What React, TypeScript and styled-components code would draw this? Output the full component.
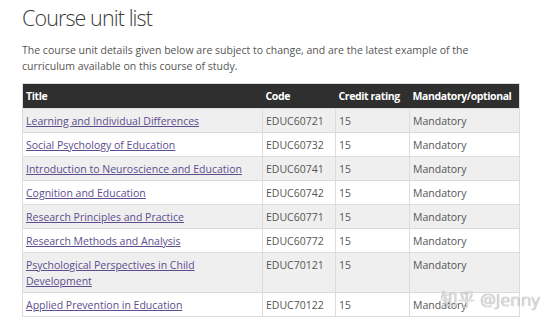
import styled, { createGlobalStyle } from "styled-components";

const units = [
  { title: "Learning and Individual Differences", code: "EDUC60721" },
  { title: "Social Psychology of Education", code: "EDUC60732" },
  { title: "Introduction to Neuroscience and Education", code: "EDUC60741" },
  { title: "Cognition and Education", code: "EDUC60742" },
  { title: "Research Principles and Practice", code: "EDUC60771" },
  { title: "Research Methods and Analysis", code: "EDUC60772" },
  { title: "Psychological Perspectives in Child Development", code: "EDUC70121" },
  { title: "Applied Prevention in Education", code: "EDUC70122" },
];

export default function App() {
  return (
    <>
      <GlobalStyle />
      <StyledPage>
        <StyledHeading>Course unit list</StyledHeading>
        <StyledIntro>
          The course unit details given below are subject to change, and are the latest example of the
          curriculum available on this course of study.
        </StyledIntro>
        <StyledTable>
          <colgroup>
            <col style={{ width: 240 }} />
            <col style={{ width: 73 }} />
            <col style={{ width: 74 }} />
            <col />
          </colgroup>
          <thead>
            <tr>
              <StyledTh>Title</StyledTh>
              <StyledTh>Code</StyledTh>
              <StyledTh>Credit rating</StyledTh>
              <StyledTh>Mandatory/optional</StyledTh>
            </tr>
          </thead>
          <tbody>
            {units.map((unit) => (
              <StyledRow key={unit.code}>
                <StyledTd>
                  <StyledLink href="#">{unit.title}</StyledLink>
                </StyledTd>
                <StyledTd>{unit.code}</StyledTd>
                <StyledTd>15</StyledTd>
                <StyledTd>Mandatory</StyledTd>
              </StyledRow>
            ))}
          </tbody>
        </StyledTable>
        <StyledWatermark>知乎 @Jenny</StyledWatermark>
      </StyledPage>
    </>
  );
}

const GlobalStyle = createGlobalStyle`
  body {
    margin: 0;
    background: #fff;
    font-family: "Open Sans", "Noto Sans CJK SC", sans-serif;
  }
`;

const StyledPage = styled.div`
  position: relative;
  width: 554px;
  height: 332px;
  padding: 0 34px 0 22px;
  box-sizing: border-box;
  overflow: hidden;
`;

const StyledHeading = styled.h1`
  margin: 0;
  padding-top: 4px;
  font-size: 21.5px;
  font-weight: 300;
  letter-spacing: -0.9px;
  line-height: 28px;
  color: #3a3a3a;
`;

const StyledIntro = styled.p`
  margin: 10px 0 9px;
  width: 460px;
  font-size: 10.5px;
  line-height: 16px;
  color: #555;
`;

const StyledTable = styled.table`
  width: 498px;
  table-layout: fixed;
  border-collapse: collapse;
  font-size: 10.5px;
  line-height: 16px;
  border: 1px solid #dcdcdc;
`;

const StyledTh = styled.th`
  background: #2f2f2f;
  color: #fff;
  font-weight: 700;
  letter-spacing: -0.4px;
  text-align: left;
  white-space: nowrap;
  padding: 4px 4px 4px 3px;
  height: 16px;
`;

const StyledRow = styled.tr`
  &:nth-child(odd) {
    background: #efefef;
  }
  &:nth-child(even) {
    background: #fff;
  }
`;

const StyledTd = styled.td`
  padding: 4px 4px 3px 3px;
  vertical-align: top;
  color: #555;
  border: 1px solid #dcdcdc;
`;

const StyledLink = styled.a`
  color: #5c4d8e;
  text-decoration: underline;
`;

const StyledWatermark = styled.div`
  position: absolute;
  right: 14px;
  bottom: 21px;
  font-size: 17px;
  font-weight: 300;
  color: rgba(255, 255, 255, 0.85);
  text-shadow: 0 0 1px #888, 0 0 1px #888;
  letter-spacing: 0.5px;
`;
